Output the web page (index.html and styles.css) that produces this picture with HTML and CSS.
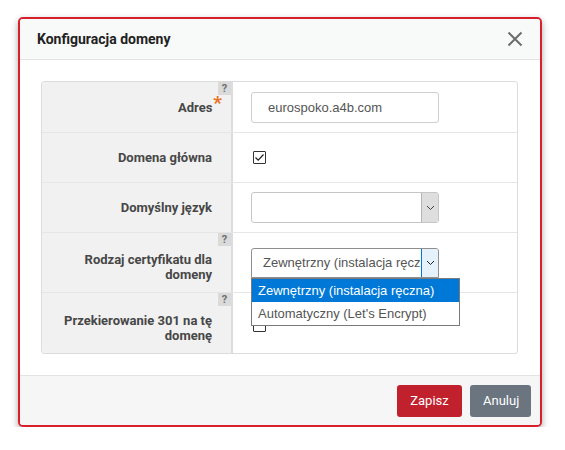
FILE: index.html
```html
<!DOCTYPE html>
<html lang="pl">
<head>
<meta charset="utf-8">
<title>Konfiguracja domeny</title>
<link rel="stylesheet" href="styles.css">
</head>
<body>
<div class="modal">
  <div class="modal-header">
    <h4 class="modal-title">Konfiguracja domeny</h4>
    <button class="close" type="button" aria-label="Zamknij">
      <svg width="16" height="16" viewBox="0 0 16 16"><path d="M1.5 1.5 L14.5 14.5 M14.5 1.5 L1.5 14.5" stroke="#6d6d6d" stroke-width="2" fill="none"/></svg>
    </button>
  </div>
  <div class="modal-body">
    <div class="form-table">
      <div class="row h50">
        <div class="label-cell"><span class="help">?</span><span class="label">Adres<span class="req">*</span></span></div>
        <div class="field-cell"><div class="text-input">eurospoko.a4b.com</div></div>
      </div>
      <div class="row h49">
        <div class="label-cell"><span class="label">Domena główna</span></div>
        <div class="field-cell"><span class="checkbox checked"><svg width="11" height="11" viewBox="0 0 11 11"><path d="M1.5 5.5 L4.2 8.2 L9.5 2.5" stroke="#222" stroke-width="1.2" fill="none"/></svg></span></div>
      </div>
      <div class="row h49">
        <div class="label-cell"><span class="label">Domyślny język</span></div>
        <div class="field-cell"><div class="select"><span class="select-value"></span><span class="arrow"><svg width="9" height="6" viewBox="0 0 9 6"><path d="M1 1 L4.5 4.5 L8 1" stroke="#444" stroke-width="1" fill="none"/></svg></span></div></div>
      </div>
      <div class="row h59">
        <div class="label-cell lower"><span class="help">?</span><span class="label">Rodzaj certyfikatu dla domeny</span></div>
        <div class="field-cell">
          <div class="select-wrap">
            <div class="select open"><span class="select-value">Zewnętrzny (instalacja ręczna)</span><span class="arrow"><svg width="9" height="6" viewBox="0 0 9 6"><path d="M1 1 L4.5 4.5 L8 1" stroke="#222" stroke-width="1" fill="none"/></svg></span></div>
            <ul class="dropdown">
              <li class="selected">Zewnętrzny (instalacja ręczna)</li>
              <li>Automatyczny (Let's Encrypt)</li>
            </ul>
          </div>
        </div>
      </div>
      <div class="row h60">
        <div class="label-cell lower"><span class="help">?</span><span class="label">Przekierowanie 301 na tę domenę</span></div>
        <div class="field-cell"><span class="checkbox low"></span></div>
      </div>
    </div>
  </div>
  <div class="modal-footer">
    <button class="btn btn-save" type="button">Zapisz</button>
    <button class="btn btn-cancel" type="button">Anuluj</button>
  </div>
</div>
</body>
</html>
```
FILE: styles.css
```css
html, body {
  margin: 0;
  padding: 0;
  background: #ffffff;
}
body {
  padding: 17px 0 0 18px;
  font-family: Roboto, "Liberation Sans", Arial, sans-serif;
}
.modal {
  box-sizing: border-box;
  width: 524px;
  border: 2px solid #d7202c;
  border-radius: 5px;
  background: #ffffff;
  box-shadow: 0 3px 7px rgba(0,0,0,0.35);
  overflow: visible;
}
.modal-header {
  height: 40px;
  display: flex;
  align-items: center;
  justify-content: space-between;
  padding: 0 17px;
  background: #f8f9f9;
  border-bottom: 1px solid #e3e3e3;
  border-radius: 3px 3px 0 0;
}
.modal-title {
  margin: 0;
  font-size: 14px;
  font-weight: 700;
  color: #222;
  letter-spacing: 0;
}
.close {
  border: 0;
  background: none;
  padding: 0;
  margin-right: 0;
  width: 16px;
  height: 16px;
  display: flex;
}
.modal-body {
  padding: 21px 22px 21px 21px;
}
.form-table {
  border: 1px solid #dcdcdc;
  border-radius: 3px;
  background: #ffffff;
}
.row {
  display: flex;
  border-top: 1px solid #e6e6e6;
}
.row:first-child {
  border-top: 0;
}
.h50 { height: 50px; }
.h49 { height: 49px; }
.h59 { height: 59px; }
.h60 { height: 60px; }
.label-cell {
  position: relative;
  box-sizing: border-box;
  width: 191px;
  flex: none;
  background: #f1f1f1;
  border-right: 2px solid #dcdcdc;
  display: flex;
  align-items: center;
  justify-content: flex-end;
  padding: 0 19px 0 10px;
  text-align: right;
}
.row:first-child .label-cell {
  border-top-left-radius: 3px;
}
.row:last-child .label-cell {
  border-bottom-left-radius: 3px;
}
.label-cell.lower {
  padding-top: 9px;
}
.label {
  font-size: 13px;
  font-weight: 700;
  color: #474747;
  line-height: 15px;
}
.req {
  color: #e8701e;
  font-size: 19px;
  position: relative;
  top: -3px;
  line-height: 10px;
  margin-right: -10px;
  margin-left: 1px;
}
.help {
  position: absolute;
  top: 0;
  right: 0;
  width: 13px;
  height: 13px;
  background: #dadada;
  color: #6f6f6f;
  font-size: 11px;
  font-weight: 700;
  line-height: 13px;
  text-align: center;
}
.field-cell {
  flex: 1;
  display: flex;
  align-items: center;
  padding-left: 18px;
}
.text-input {
  box-sizing: border-box;
  width: 188px;
  height: 31px;
  border: 1px solid #cfcfcf;
  border-radius: 3px;
  padding: 0 0 0 16px;
  font-family: "Liberation Sans", Arial, sans-serif;
  font-size: 13px;
  line-height: 29px;
  color: #555;
}
.checkbox {
  box-sizing: border-box;
  width: 13px;
  height: 13px;
  border: 1px solid #333;
  border-radius: 1px;
  background: #fff;
  display: flex;
  align-items: center;
  justify-content: center;
  margin-left: 2px;
}
.checkbox.low {
  margin-top: 4px;
}
.select-wrap {
  position: relative;
}
.select {
  box-sizing: border-box;
  width: 188px;
  height: 31px;
  border: 1px solid #c6c6c6;
  border-radius: 3px;
  display: flex;
  align-items: stretch;
  overflow: hidden;
  background: #fff;
}
.select-value {
  flex: 1;
  overflow: hidden;
  white-space: nowrap;
  padding-left: 11px;
  font-family: "Liberation Sans", Arial, sans-serif;
  font-size: 13px;
  line-height: 29px;
  color: #555;
}
.arrow {
  box-sizing: border-box;
  width: 17px;
  flex: none;
  background: #dedede;
  border-left: 1px solid #b5b5b5;
  display: flex;
  align-items: center;
  justify-content: center;
}
.select.open {
  border-color: #8f8f8f;
  height: 30px;
  border-radius: 3px 3px 0 0;
}
.select.open .select-value {
  line-height: 28px;
  color: #555;
}
.select.open .arrow {
  background: #e5f1fb;
  border: 1px solid #0078d7;
  margin: -1px -1px -1px 0;
  width: 18px;
}
.dropdown {
  position: absolute;
  left: 0;
  top: 30px;
  margin: 0;
  padding: 0;
  list-style: none;
  width: 209px;
  box-sizing: border-box;
  border: 1px solid #7a7a7a;
  background: #fff;
  z-index: 5;
}
.dropdown li {
  height: 23px;
  line-height: 23px;
  padding-left: 6px;
  font-family: "Liberation Sans", Arial, sans-serif;
  font-size: 13px;
  color: #555;
  white-space: nowrap;
}
.dropdown li.selected {
  background: #0078d7;
  color: #fff;
}
.modal-footer {
  height: 49px;
  display: flex;
  align-items: center;
  justify-content: flex-end;
  gap: 8px;
  padding: 0 9px;
  background: #f6f6f6;
  border-top: 1px solid #e3e3e3;
  border-radius: 0 0 3px 3px;
}
.btn {
  height: 32px;
  border: 0;
  border-radius: 3px;
  color: #fff;
  font-family: Roboto, "Liberation Sans", Arial, sans-serif;
  font-size: 13px;
  padding: 0 13px;
}
.btn-save {
  background: #c1212d;
  width: 65px;
}
.btn-cancel {
  background: #6b7580;
  width: 61px;
}
```
